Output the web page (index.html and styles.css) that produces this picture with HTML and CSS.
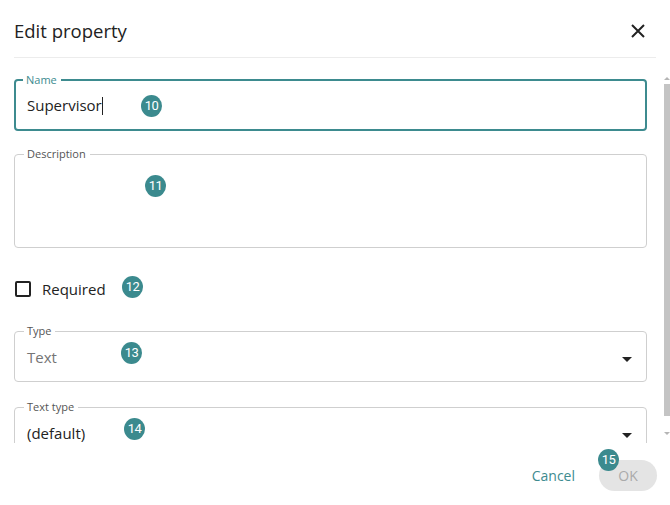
FILE: index.html
```html
<!DOCTYPE html>
<html>
<head>
<meta charset="utf-8">
<link rel="stylesheet" href="styles.css">
</head>
<body>
<div class="dialog">
  <div class="header">
    <h1 class="title">Edit property</h1>
    <svg class="close" width="16" height="16" viewBox="0 0 16 16"><path d="M2 2 L14 14 M14 2 L2 14" stroke="#222" stroke-width="2" fill="none"/></svg>
  </div>
  <div class="body">
    <div class="scroll">
      <fieldset class="field focused name">
        <legend>Name</legend>
        <div class="value">Supervisor<span class="caret"></span></div>
      </fieldset>
      <fieldset class="field desc">
        <legend>Description</legend>
        <div class="area"></div>
      </fieldset>
      <div class="check-row">
        <span class="checkbox"></span>
        <span class="check-label">Required</span>
      </div>
      <fieldset class="field select type">
        <legend>Type</legend>
        <div class="value muted">Text</div>
        <span class="arrow"></span>
      </fieldset>
      <fieldset class="field select texttype">
        <legend>Text type</legend>
        <div class="value">(default)</div>
        <span class="arrow"></span>
      </fieldset>
    </div>
    <div class="scrollbar">
      <span class="sb-up"></span>
      <span class="sb-thumb"></span>
      <span class="sb-down"></span>
    </div>
  </div>
  <div class="footer">
    <button class="btn-cancel">Cancel</button>
    <button class="btn-ok">OK</button>
  </div>
  <span class="badge b10">10</span>
  <span class="badge b11">11</span>
  <span class="badge b12">12</span>
  <span class="badge b13">13</span>
  <span class="badge b14">14</span>
  <span class="badge b15">15</span>
</div>
</body>
</html>
```
FILE: styles.css
```css
* { box-sizing: border-box; }
html, body { margin: 0; padding: 0; background: #fff; }
body { font-family: "Open Sans", "Noto Sans", sans-serif; color: #222; }

.dialog {
  position: relative;
  width: 670px;
  height: 505px;
  display: flex;
  flex-direction: column;
  overflow: hidden;
}

.header {
  height: 58px;
  margin: 0 14px;
  border-bottom: 1px solid #ececec;
  display: flex;
  align-items: center;
  justify-content: space-between;
  padding-right: 10px;
}
.title {
  margin: 0;
  font-size: 18.5px;
  font-weight: 400;
  color: #222;
  position: relative;
  top: 2px;
}
.close { display: block; position: relative; top: 2px; }

.body {
  height: 385px;
  display: flex;
}
.scroll {
  flex: 1;
  padding: 15px 17px 0 14px;
  overflow: hidden;
}

.field {
  margin: 0;
  border: 1px solid #cfcfcf;
  border-radius: 4px;
  padding: 0 12px;
  position: relative;
  min-width: 0;
}
.field legend {
  font-size: 11px;
  line-height: 14px;
  padding: 0 4px 0 3px;
  margin-left: -3px;
  color: #555;
}
.field.focused {
  border: 2px solid #3d8b8f;
  padding: 0 11px;
}
.field.focused legend { color: #3d8b8f; margin-left: -4px; }

.value {
  font-size: 15px;
  line-height: 20px;
  color: #222;
}
.value.muted { color: #757575; }

.name { height: 58px; }
.name .value { padding-top: 8px; }
.caret {
  display: inline-block;
  width: 1px;
  height: 18px;
  background: #222;
  vertical-align: -4px;
}

.desc { height: 101px; margin-top: 16px; }

.check-row {
  display: flex;
  align-items: center;
  height: 20px;
  margin-top: 31px;
  padding-left: 1px;
}
.checkbox {
  width: 16px;
  height: 16px;
  border: 2px solid #222;
  border-radius: 2px;
}
.check-label {
  font-size: 15px;
  margin-left: 11px;
  color: #222;
}

.select { height: 58px; }
.select .value { padding-top: 9px; }
.type { margin-top: 25px; }
.texttype { margin-top: 18px; }
.arrow {
  position: absolute;
  right: 14px;
  top: 19px;
  width: 0; height: 0;
  border-left: 5px solid transparent;
  border-right: 5px solid transparent;
  border-top: 5px solid #222;
}

.scrollbar {
  width: 6px;
  display: flex;
  flex-direction: column;
  align-items: center;
  padding-top: 19px;
}
.sb-up, .sb-down {
  width: 0; height: 0;
  border-left: 3px solid transparent;
  border-right: 3px solid transparent;
}
.sb-up { border-bottom: 3px solid #b5b5b5; }
.sb-down { border-top: 3px solid #b5b5b5; margin-top: 16px; }
.sb-thumb {
  width: 6px;
  height: 332px;
  background: #c4c4c4;
  margin-top: 4px;
}

.footer {
  flex: 1;
  display: flex;
  align-items: center;
  justify-content: flex-end;
  padding: 3px 13px 0 0;
  gap: 24px;
}
button { font-family: inherit; border: none; background: none; cursor: pointer; }
.btn-cancel {
  font-size: 14px;
  color: #3d8b8f;
  padding: 0;
}
.btn-ok {
  width: 58px;
  height: 31px;
  border-radius: 16px;
  background: #e4e4e4;
  color: #aaa;
  font-size: 14px;
}

.badge {
  position: absolute;
  width: 21px;
  height: 22px;
  margin: -11px 0 0 -10px;
  border-radius: 50%;
  background: #3b8a8e;
  color: #fff;
  font-family: Roboto, "Open Sans", sans-serif;
  font-size: 13px;
  line-height: 22px;
  text-align: center;
  letter-spacing: -0.5px;
}
.b10 { left: 151px; top: 106px; }
.b11 { left: 155px; top: 186px; }
.b12 { left: 132px; top: 287px; }
.b13 { left: 131px; top: 353px; }
.b14 { left: 134px; top: 429px; }
.b15 { left: 608px; top: 460px; }
```
